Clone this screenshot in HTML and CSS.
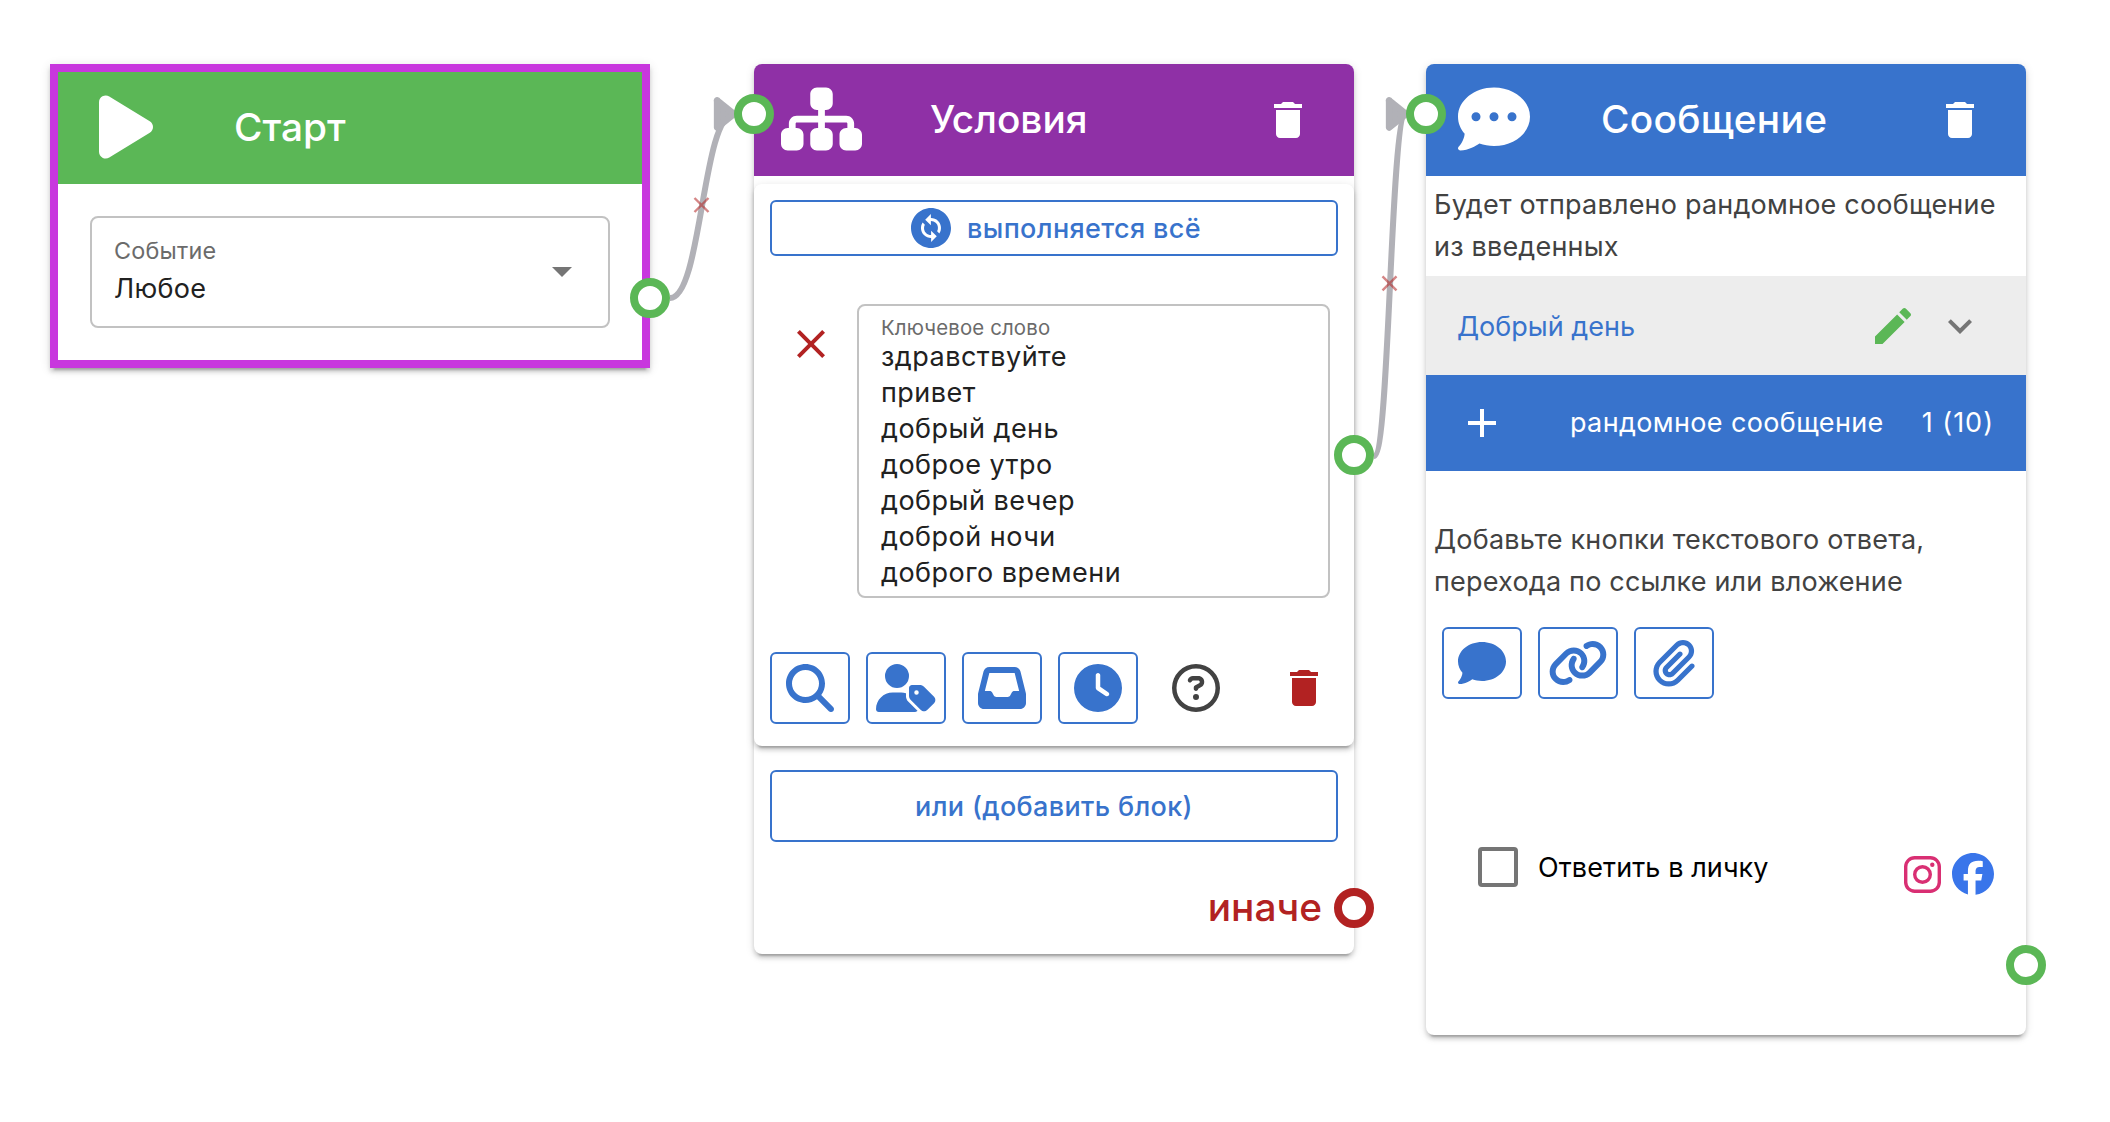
FILE: index.html
```html
<!DOCTYPE html>
<html lang="ru">
<head>
    <meta charset="UTF-8">
    <meta name="viewport" content="width=device-width, initial-scale=1.0">
    <title>Конструктор</title>
    <link rel="stylesheet" href="styles.css">
</head>
<body>
<div class="canvas">

    <!-- Start -->
    <div class="node node-start">
        <div class="node-header green">
            <svg class="node-icon" width="54" height="72" viewBox="0 0 384 512"><path d="M73 39c-14.8-9.1-33.4-9.4-48.5-.9S0 62.6 0 80V432c0 17.4 9.4 33.4 24.5 41.9s33.7 8.1 48.5-.9L361 297c14.3-8.7 23-24.2 23-41s-8.7-32.2-23-41L73 39z"/></svg>
            <span class="title">Старт</span>
        </div>
        <div class="select">
            <div class="select-text">
                <span class="select-label">Событие</span>
                <span class="select-value">Любое</span>
            </div>
            <svg width="20" height="10" viewBox="0 0 20 10"><path d="M0 0h20L10 10z"/></svg>
        </div>
        <span class="port port-out start-out"></span>
    </div>

    <!-- Conditions -->
    <div class="node node-cond">
        <div class="node-header purple">
            <svg class="node-icon" width="81" height="72" viewBox="0 0 576 512"><path d="M208 80c0-26.5 21.5-48 48-48h64c26.5 0 48 21.5 48 48v64c0 26.5-21.5 48-48 48h-8v40H464c30.9 0 56 25.1 56 56v32h8c26.5 0 48 21.5 48 48v64c0 26.5-21.5 48-48 48H464c-26.5 0-48-21.5-48-48V368c0-26.5 21.5-48 48-48h8V288c0-4.4-3.6-8-8-8H312v40h8c26.5 0 48 21.5 48 48v64c0 26.5-21.5 48-48 48H256c-26.5 0-48-21.5-48-48V368c0-26.5 21.5-48 48-48h8V280H112c-4.4 0-8 3.6-8 8v32h8c26.5 0 48 21.5 48 48v64c0 26.5-21.5 48-48 48H48c-26.5 0-48-21.5-48-48V368c0-26.5 21.5-48 48-48h8V288c0-30.9 25.1-56 56-56H264V192h-8c-26.5 0-48-21.5-48-48V80z"/></svg>
            <span class="title">Условия</span>
            <svg class="trash" width="48" height="48" viewBox="0 0 24 24"><path d="M6 19c0 1.1.9 2 2 2h8c1.1 0 2-.9 2-2V7H6v12zM19 4h-3.5l-1-1h-5l-1 1H5v2h14V4z"/></svg>
        </div>
        <div class="cond-block">
            <div class="btn btn-all">
                <svg width="48" height="48" viewBox="0 0 24 24"><path d="M12,2C6.48,2,2,6.48,2,12c0,5.52,4.48,10,10,10s10-4.48,10-10C22,6.48,17.52,2,12,2z M12.06,19v-2.01c-0.02,0-0.04,0-0.06,0 c-1.28,0-2.56-0.49-3.54-1.46c-1.71-1.71-1.92-4.35-0.64-6.29l1.1,1.1c-0.71,1.33-0.53,3.01,0.59,4.13c0.7,0.7,1.62,1.03,2.54,1.01 v-2.14l2.83,2.83L12.06,19z M16.17,14.76l-1.1-1.1c0.71-1.33,0.53-3.01-0.59-4.13C13.79,8.84,12.9,8.5,12,8.5c-0.02,0-0.04,0-0.06,0 v2.15L9.11,7.83L11.94,5v2.02c1.3-0.02,2.61,0.45,3.6,1.45C17.24,10.17,17.45,12.82,16.17,14.76z"/></svg>
                <span class="btn-text">выполняется всё</span>
            </div>
            <div class="keyword-row">
                <svg class="remove" width="48" height="48" viewBox="0 0 24 24"><path d="M19 6.41L17.59 5 12 10.59 6.41 5 5 6.41 10.59 12 5 17.59 6.41 19 12 13.41 17.59 19 19 17.59 13.41 12z"/></svg>
                <div class="keywords">
                    <span class="keywords-label">Ключевое слово</span>
                    <span>здравствуйте</span>
                    <span>привет</span>
                    <span>добрый день</span>
                    <span>доброе утро</span>
                    <span>добрый вечер</span>
                    <span>доброй ночи</span>
                    <span>доброго времени</span>
                </div>
            </div>
            <div class="tools">
                <div class="btn tool"><svg width="48" height="48" viewBox="0 0 512 512"><path d="M416 208c0 45.9-14.9 88.3-40 122.7L502.6 457.4c12.5 12.5 12.5 32.8 0 45.3s-32.8 12.5-45.3 0L330.7 376c-34.4 25.2-76.8 40-122.7 40C93.1 416 0 322.9 0 208S93.1 0 208 0S416 93.1 416 208zM208 352a144 144 0 1 0 0-288 144 144 0 1 0 0 288z"/></svg></div>
                <div class="btn tool"><svg width="60" height="48" viewBox="0 0 640 512"><path d="M224 256A128 128 0 1 0 224 0a128 128 0 1 0 0 256zm-45.7 48C79.8 304 0 383.8 0 482.3C0 498.7 13.3 512 29.7 512H418.3c10 0 18.8-4.9 24.2-12.5l-99.2-99.2c-14.9-14.9-23.3-35.1-23.3-56.1v-33c-15.9-4.7-32.8-7.2-50.3-7.2H178.3zM384 224c-17.7 0-32 14.3-32 32v82.7c0 17 6.7 33.3 18.7 45.3L478.1 491.3c18.7 18.7 49.1 18.7 67.9 0l73.4-73.4c18.7-18.7 18.7-49.1 0-67.9L512 242.7c-12-12-28.3-18.7-45.3-18.7H384zm24 80a24 24 0 1 1 48 0 24 24 0 1 1 -48 0z"/></svg></div>
                <div class="btn tool"><svg width="48" height="48" viewBox="0 0 512 512"><path d="M121 32C91.6 32 66 52 58.9 80.5L1.9 308.4C.6 313.5 0 318.7 0 323.9V416c0 35.3 28.7 64 64 64H448c35.3 0 64-28.7 64-64V323.9c0-5.2-.6-10.4-1.9-15.5l-57-227.9C446 52 420.4 32 391 32H121zm0 64H391l48 192H387.8c-12.1 0-23.2 6.8-28.6 17.7l-14.3 28.6c-5.4 10.8-16.5 17.7-28.6 17.7H195.8c-12.1 0-23.2-6.8-28.6-17.7l-14.3-28.6c-5.4-10.8-16.5-17.7-28.6-17.7H73L121 96z"/></svg></div>
                <div class="btn tool"><svg width="48" height="48" viewBox="0 0 512 512"><path d="M256 0a256 256 0 1 1 0 512A256 256 0 1 1 256 0zM232 120V256c0 8 4 15.5 10.7 20l96 64c11 7.4 25.9 4.4 33.3-6.7s4.4-25.9-6.7-33.3L280 243.2V120c0-13.3-10.7-24-24-24s-24 10.7-24 24z"/></svg></div>
                <svg class="help" width="48" height="48" viewBox="0 0 512 512"><path d="M464 256A208 208 0 1 0 48 256a208 208 0 1 0 416 0zM0 256a256 256 0 1 1 512 0A256 256 0 1 1 0 256zm169.8-90.7c7.9-22.3 29.1-37.3 52.8-37.3h58.3c34.9 0 63.1 28.3 63.1 63.1c0 22.6-12.1 43.5-31.7 54.8L280 264.4c-.2 13-10.9 23.6-24 23.6c-13.3 0-24-10.7-24-24V250.5c0-8.6 4.6-16.5 12.1-20.8l44.3-25.4c4.7-2.7 7.6-7.7 7.6-13.1c0-8.4-6.8-15.1-15.1-15.1H222.6c-3.4 0-6.4 2.1-7.5 5.3l-.4 1.2c-4.4 12.5-18.2 19-30.6 14.6s-19-18.2-14.6-30.6l.4-1.2zM224 352a32 32 0 1 1 64 0 32 32 0 1 1 -64 0z"/></svg>
                <svg class="trash red" width="48" height="48" viewBox="0 0 24 24"><path d="M6 19c0 1.1.9 2 2 2h8c1.1 0 2-.9 2-2V7H6v12zM19 4h-3.5l-1-1h-5l-1 1H5v2h14V4z"/></svg>
            </div>
        </div>
        <div class="btn btn-or"><span class="btn-text">или (добавить блок)</span></div>
        <div class="else-row">иначе</div>
        <span class="port port-in"></span>
        <span class="port port-out cond-out"></span>
        <span class="port port-out port-else"></span>
    </div>

    <!-- Message -->
    <div class="node node-msg">
        <div class="node-header blue">
            <svg class="node-icon" width="72" height="72" viewBox="0 0 512 512"><path fill-rule="evenodd" d="M512 240c0 114.9-114.6 208-256 208c-37.1 0-72.3-6.4-104.1-17.9c-11.9 8.7-31.3 20.6-54.3 30.6C73.6 471.1 44.7 480 16 480c-6.5 0-12.3-3.9-14.8-9.9c-2.5-6-1.1-12.8 3.4-17.4c.3-.3 .7-.7 1.3-1.4c1.1-1.2 2.8-3.1 4.9-5.7c4.1-5 9.6-12.4 15.2-21.6c10-16.6 19.5-38.4 21.4-62.9C17.7 326.8 0 285.1 0 240C0 125.1 114.6 32 256 32s256 93.1 256 208zM128 208a32 32 0 1 0 0 64 32 32 0 1 0 0-64zm128 0a32 32 0 1 0 0 64 32 32 0 1 0 0-64zm128 0a32 32 0 1 0 0 64 32 32 0 1 0 0-64z"/></svg>
            <span class="title">Сообщение</span>
            <svg class="trash" width="48" height="48" viewBox="0 0 24 24"><path d="M6 19c0 1.1.9 2 2 2h8c1.1 0 2-.9 2-2V7H6v12zM19 4h-3.5l-1-1h-5l-1 1H5v2h14V4z"/></svg>
        </div>
        <p class="note">Будет отправлено рандомное сообщение<br>из введенных</p>
        <div class="msg-row">
            <span class="msg-text">Добрый день</span>
            <svg class="edit" width="48" height="48" viewBox="0 0 24 24"><path d="M3 17.25V21h3.75L17.81 9.94l-3.75-3.75L3 17.25zM20.71 7.04c.39-.39.39-1.02 0-1.41l-2.34-2.34c-.39-.39-1.02-.39-1.41 0l-1.83 1.83 3.75 3.75 1.83-1.83z"/></svg>
            <svg class="expand" width="48" height="48" viewBox="0 0 24 24"><path d="M16.59 8.59L12 13.17 7.41 8.59 6 10l6 6 6-6z"/></svg>
        </div>
        <div class="add-row">
            <svg width="48" height="48" viewBox="0 0 24 24"><path d="M19 13h-6v6h-2v-6H5v-2h6V5h2v6h6v2z"/></svg>
            <span class="add-text">рандомное сообщение</span>
            <span class="add-count">1 (10)</span>
        </div>
        <p class="note note-buttons">Добавьте кнопки текстового ответа,<br>перехода по ссылке или вложение</p>
        <div class="tools msg-tools">
            <div class="btn tool"><svg width="48" height="48" viewBox="0 0 512 512"><path d="M512 240c0 114.9-114.6 208-256 208c-37.1 0-72.3-6.4-104.1-17.9c-11.9 8.7-31.3 20.6-54.3 30.6C73.6 471.1 44.7 480 16 480c-6.5 0-12.3-3.9-14.8-9.9c-2.5-6-1.1-12.8 3.4-17.4c.3-.3 .7-.7 1.3-1.4c1.1-1.2 2.8-3.1 4.9-5.7c4.1-5 9.6-12.4 15.2-21.6c10-16.6 19.5-38.4 21.4-62.9C17.7 326.8 0 285.1 0 240C0 125.1 114.6 32 256 32s256 93.1 256 208z"/></svg></div>
            <div class="btn tool"><svg width="60" height="48" viewBox="0 0 640 512"><path d="M579.8 267.7c56.5-56.5 56.5-148 0-204.5c-50-50-128.8-56.5-186.3-15.4l-1.6 1.1c-14.4 10.3-17.7 30.3-7.4 44.6s30.3 17.7 44.6 7.4l1.6-1.1c32.1-22.9 76-19.3 103.8 8.6c31.5 31.5 31.5 82.5 0 114L422.3 334.8c-31.5 31.5-82.5 31.5-114 0c-27.9-27.9-31.5-71.8-8.6-103.8l1.1-1.6c10.3-14.4 6.9-34.4-7.4-44.6s-34.4-6.9-44.6 7.4l-1.1 1.6C206.5 251.2 213 330 263 380c56.5 56.5 148 56.5 204.5 0L579.8 267.7zM60.2 244.3c-56.5 56.5-56.5 148 0 204.5c50 50 128.8 56.5 186.3 15.4l1.6-1.1c14.4-10.3 17.7-30.3 7.4-44.6s-30.3-17.7-44.6-7.4l-1.6 1.1c-32.1 22.9-76 19.3-103.8-8.6C74 372 74 321 105.5 289.5L217.7 177.2c31.5-31.5 82.5-31.5 114 0c27.9 27.9 31.5 71.8 8.6 103.9l-1.1 1.6c-10.3 14.4-6.9 34.4 7.4 44.6s34.4 6.9 44.6-7.4l1.1-1.6C433.5 260.8 427 182 377 132c-56.5-56.5-148-56.5-204.5 0L60.2 244.3z"/></svg></div>
            <div class="btn tool"><svg width="42" height="48" viewBox="0 0 448 512"><path d="M364.2 83.8c-24.4-24.4-64-24.4-88.4 0l-184 184c-42.1 42.1-42.1 110.3 0 152.4s110.3 42.1 152.4 0l152-152c10.9-10.9 28.7-10.9 39.6 0s10.9 28.7 0 39.6l-152 152c-64 64-167.6 64-231.6 0s-64-167.6 0-231.6l184-184c46.3-46.3 121.3-46.3 167.6 0s46.3 121.3 0 167.6l-176 176c-28.6 28.6-75 28.6-103.6 0s-28.6-75 0-103.6l144-144c10.9-10.9 28.7-10.9 39.6 0s10.9 28.7 0 39.6l-144 144c-6.7 6.7-6.7 17.7 0 24.4s17.7 6.7 24.4 0l176-176c24.4-24.4 24.4-64 0-88.4z"/></svg></div>
        </div>
        <div class="dm-row">
            <span class="checkbox"></span>
            <span class="dm-text">Ответить в личку</span>
            <div class="socials">
                <svg class="insta" width="37" height="37" viewBox="0 0 37 37"><rect x="1.7" y="1.7" width="33.6" height="33.6" rx="9"/><circle cx="18.5" cy="18.5" r="7.8"/><circle class="dot" cx="28.3" cy="8.8" r="2.2"/></svg>
                <svg class="fb" width="42" height="42" viewBox="0 0 512 512"><path d="M512 256C512 114.6 397.4 0 256 0S0 114.6 0 256C0 376 82.7 476.8 194.2 504.5V334.2H141.4V256h52.8V222.3c0-87.1 39.4-127.5 125-127.5c16.2 0 44.2 3.2 55.7 6.4V172c-6-.6-16.5-1-29.6-1c-42 0-58.2 15.9-58.2 57.2V256h83.6l-14.4 78.2H287V510.1C413.8 494.8 512 386.9 512 256h0z"/></svg>
            </div>
        </div>
        <span class="port port-in"></span>
        <span class="port port-out msg-out"></span>
    </div>

    <!-- Connections -->
    <svg class="edges" width="2110" height="1122" viewBox="0 0 2110 1122">
        <defs>
            <marker id="arrow" viewBox="-10 -10 20 20" markerWidth="11.2" markerHeight="11.2" refX="0" refY="0" orient="auto">
                <polyline class="arrow-head" points="-5,-4 0,0 -5,4 -5,-4"/>
            </marker>
        </defs>
        <path class="edge" marker-end="url(#arrow)" d="M670 298C702 298 702 114 734 114"/>
        <path class="edge" marker-end="url(#arrow)" d="M1374 456C1390 456 1390 114 1406 114"/>
        <path class="edge-remove" d="M694.5 198l14 14m0-14l-14 14"/>
        <path class="edge-remove" d="M1382.5 276.3l14 14m0-14l-14 14"/>
    </svg>
</div>
</body>
</html>
```
FILE: styles.css
```css
body {
    margin: 0;
    background: #fff;
    font-family: Inter, "Noto Sans", sans-serif;
    font-size: 27px;
    color: #212121;
}

.canvas {
    position: relative;
    width: 2110px;
    height: 1122px;
    overflow: hidden;
}

svg {
    display: block;
    flex: none;
    fill: currentColor;
}

/* Nodes */
.node {
    position: absolute;
    top: 64px;
    width: 600px;
    box-sizing: border-box;
    background: #fff;
    border-radius: 8px;
    box-shadow: 0 6px 2px -4px rgba(0, 0, 0, 0.2), 0 4px 4px rgba(0, 0, 0, 0.14), 0 2px 10px rgba(0, 0, 0, 0.12);
}

.node-start {
    left: 50px;
    height: 304px;
    border: 8px solid #c837de;
    border-radius: 0;
}

.node-cond {
    left: 754px;
    height: 890px;
}

.node-msg {
    left: 1426px;
    height: 971px;
}

.node-header {
    display: flex;
    align-items: center;
    box-sizing: border-box;
    height: 112px;
    padding: 0 42px 0 27px;
    color: #fff;
    border-radius: 8px 8px 0 0;
}

.node-start .node-header {
    padding-left: 41px;
    border-radius: 0;
}

.node-msg .node-header {
    padding-left: 32px;
}

.green { background: #5bb756; }
.purple { background: #8f30a6; }
.blue { background: #3873cc; }

.node-icon {
    margin-bottom: 2px;
}

.title {
    margin: 0 0 3px 81px;
    font-size: 38.8px;
    font-weight: 500;
}

.node-cond .title { margin-left: 68px; }

.node-msg .title {
    margin-left: 71px;
    letter-spacing: 0.3px;
}

.trash {
    margin-left: auto;
}

/* Ports */
.port {
    position: absolute;
    z-index: 3;
    box-sizing: border-box;
    width: 40px;
    height: 40px;
    border: 8px solid #5bb756;
    border-radius: 50%;
    background: #fff;
}

.port-in { left: -20px; top: 30px; }
.port-out { right: -20px; }
.start-out { right: -28px; top: 206px; }
.cond-out { top: 371px; }
.port-else { top: 824px; border-color: #b22222; }
.msg-out { top: 881px; }

/* Start */
.select {
    display: flex;
    justify-content: space-between;
    align-items: center;
    box-sizing: border-box;
    height: 112px;
    margin: 32px;
    padding: 0 36px 0 22px;
    border: 2px solid #c2c2c2;
    border-radius: 8px;
    color: #757575;
}

.select-text {
    display: flex;
    flex-direction: column;
    margin-bottom: 2px;
}

.select-label {
    font-size: 23.4px;
    line-height: 36px;
    letter-spacing: 0.2px;
    color: #6b6b6b;
}

.select-value {
    line-height: 40px;
    letter-spacing: 0.3px;
    color: #212121;
}

/* Conditions */
.cond-block {
    box-sizing: border-box;
    height: 562px;
    margin-top: 8px;
    padding: 16px;
    border-radius: 8px;
    background: #fff;
    box-shadow: 0 6px 2px -4px rgba(0, 0, 0, 0.2), 0 4px 4px rgba(0, 0, 0, 0.14), 0 2px 10px rgba(0, 0, 0, 0.12);
}

.btn {
    display: flex;
    justify-content: center;
    align-items: center;
    box-sizing: border-box;
    border: 2px solid #3873cc;
    border-radius: 6px;
    color: #3873cc;
}

.btn-text {
    font-weight: 500;
    letter-spacing: 0.35px;
}

.btn-all {
    height: 56px;
    gap: 12px;
}

.keyword-row {
    display: flex;
    justify-content: space-between;
    margin: 48px 8px 0 17px;
}

.remove {
    margin-top: 16px;
    color: #b22222;
}

.keywords {
    display: flex;
    flex-direction: column;
    box-sizing: border-box;
    width: 473px;
    height: 294px;
    padding: 10px 22px;
    border: 2px solid #c2c2c2;
    border-radius: 8px;
    line-height: 36px;
    letter-spacing: 0.48px;
}

.keywords-label {
    font-size: 20.4px;
    line-height: 23px;
    letter-spacing: 0.15px;
    color: #6b6b6b;
}

.tools {
    display: flex;
    align-items: center;
    gap: 16px;
    margin-top: 54px;
}

.tool {
    width: 80px;
    height: 72px;
}

.help {
    margin-left: 18px;
    color: #424242;
}

.red {
    margin-right: 10px;
    color: #b22222;
}

.btn-or {
    height: 72px;
    margin: 24px 16px 0;
}

.else-row {
    display: flex;
    justify-content: flex-end;
    margin: 41px 32px 0 0;
    line-height: 48px;
    font-size: 38.8px;
    font-weight: 500;
    color: #b22222;
}

/* Message */
.note {
    margin: 0;
    padding: 8px;
    line-height: 42px;
    letter-spacing: 0.2px;
    color: #424242;
    white-space: nowrap;
}

.msg-row {
    display: flex;
    align-items: center;
    height: 99px;
    padding: 0 42px 0 31px;
    background: #ededed;
    color: #3873cc;
}

.msg-text {
    margin-top: 1px;
}

.edit {
    margin-left: auto;
    color: #5bb756;
}

.expand {
    margin-left: 19px;
    color: #757575;
}

.add-row {
    display: flex;
    align-items: center;
    height: 96px;
    padding: 0 32px;
    background: #3873cc;
    color: #fff;
}

.add-text {
    margin: 0 0 1px auto;
    letter-spacing: 0.36px;
}

.add-count {
    margin: 0 0 1px 38px;
    letter-spacing: 1px;
}

.note-buttons {
    margin-top: 40px;
}

.msg-tools {
    margin: 16px 16px 0;
}

.dm-row {
    display: flex;
    align-items: center;
    margin: 140px 32px 0 52px;
    color: #000;
}

.checkbox {
    box-sizing: border-box;
    width: 40px;
    height: 40px;
    border: 4px solid #757575;
    border-radius: 4px;
}

.dm-text {
    margin-left: 20px;
    letter-spacing: 0.1px;
}

.socials {
    display: flex;
    align-items: center;
    gap: 11px;
    margin: 14px 0 0 auto;
}

.insta {
    fill: none;
    stroke: #d92f73;
    stroke-width: 3.4;
}

.insta .dot {
    fill: #d92f73;
    stroke: none;
}

.fb {
    color: #3975ea;
}

/* Edges */
.edges {
    position: absolute;
    left: 0;
    top: 0;
    pointer-events: none;
}

.edge {
    fill: none;
    stroke: #b1b1b7;
    stroke-width: 6;
}

.arrow-head {
    fill: #b1b1b7;
    stroke: #b1b1b7;
    stroke-width: 2;
    stroke-linecap: round;
    stroke-linejoin: round;
}

.edge-remove {
    fill: none;
    stroke: #b22222;
    stroke-opacity: 0.55;
    stroke-width: 2.4;
}
```
